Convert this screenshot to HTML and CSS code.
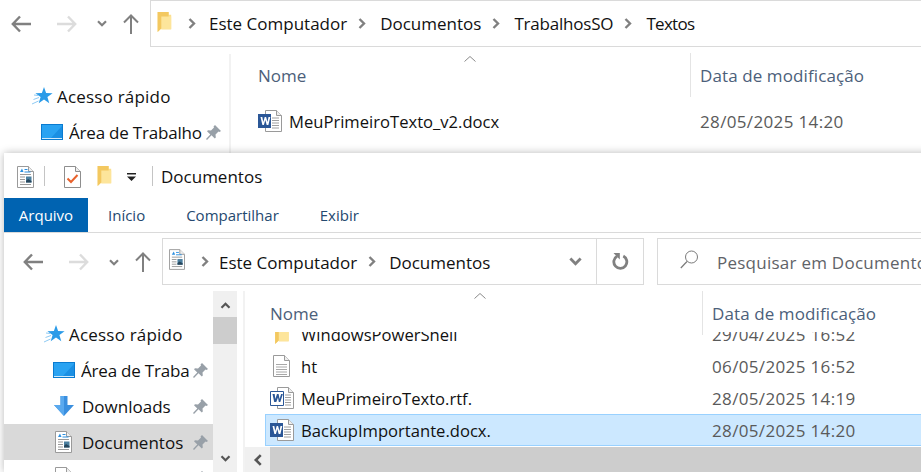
FILE: index.html
```html
<!DOCTYPE html>
<html lang="pt">
<head>
<meta charset="utf-8">
<title>Documentos</title>
<link rel="stylesheet" href="styles.css">
</head>
<body>
<svg class="defs" width="0" height="0" aria-hidden="true">
  <symbol id="i-back" viewBox="0 0 20 18"><path d="M9 1.500 1.800 9 9 16.500M2 9h18" fill="none" stroke="currentColor" stroke-width="2.400"/></symbol>
  <symbol id="i-fwd" viewBox="0 0 20 18"><path d="M11 1.500 18.200 9 11 16.500M18 9H0" fill="none" stroke="currentColor" stroke-width="2.400"/></symbol>
  <symbol id="i-up" viewBox="0 0 16 20"><path d="M1 8.500 8 1.500l7 7M8 2v18" fill="none" stroke="currentColor" stroke-width="2"/></symbol>
  <symbol id="i-chev" viewBox="0 0 10 7"><path d="M1 1.200 5 5.200 9 1.200" fill="none" stroke="currentColor" stroke-width="2.200"/></symbol>
  <symbol id="i-crumb" viewBox="0 0 8 11"><path d="M1.500 1 6 5.500 1.500 10" fill="none" stroke="currentColor" stroke-width="2.400"/></symbol>
  <symbol id="i-folder" viewBox="0 0 15 24"><path d="M0 1h12v3h2.800v16H4v-1L0 23Z" fill="#fbe08f"/><path d="M0 1h12v18H4l-4 4Z" fill="#f3c860"/><path d="M4 6h10.800v14H4Z" fill="#fde59b"/></symbol>
  <symbol id="i-star" viewBox="0 0 21 18"><path d="M12 0l2.100 6.100 6.500.1-5.200 3.900 1.900 6.200-5.300-3.700-5.300 3.700 1.900-6.200-5.200-3.900 6.500-.1Z" fill="#2b9be8"/><path d="M0 17l6.500-3M1.500 12.500l5.500-2M2 8l4.500.5" stroke="#8fcaf3" stroke-width="1"/></symbol>
  <symbol id="i-desk" viewBox="0 0 22 16"><path d="M0 0h22v16H0Z" fill="#0a7bd0"/><path d="M1 1h20v13H1Z" fill="#2aa3f2"/><path d="M10 14 21 2v12Z" fill="#1a8fe3"/><path d="M1 14.500h20" stroke="#cfeafc"/></symbol>
  <symbol id="i-pin" viewBox="0 0 15 15"><path d="M9 0l6 6-1.500 1-1-.5-3 3 .3 3-1 1-3.300-3.300L1 15l-1-1 4.300-4.500L1 6.200l1-1 3 .3 3-3-.5-1Z" fill="#98a0a8"/></symbol>
  <symbol id="i-down" viewBox="0 0 20 20"><path d="M6.500 0h7v9H20l-10 11L0 9h6.500Z" fill="#3a8fdf"/><path d="M6.500 0H10v20L0 9h6.500Z" fill="#5aa9ee"/></symbol>
  <symbol id="i-doc" viewBox="0 0 17 22"><path d="M.5.500h11l5 5v16H.5Z" fill="#fff" stroke="#9a9a9a"/><path d="M11.500.500v5h5" fill="#eee" stroke="#9a9a9a"/><path d="M3 9.500h11M3 12h11M3 14.500h11M3 17h11M3 19.500h11" stroke="#a8a8a8"/></symbol>
  <symbol id="i-docs" viewBox="0 0 17 22"><path d="M.5.500h11l5 5v16H.5Z" fill="#fff" stroke="#9a9a9a"/><path d="M11.500.500v5h5" fill="#eee" stroke="#9a9a9a"/><path d="M3 6 5 2.500 6.500 6Z" fill="#2b8fe0"/><path d="M7.500 3.500h3M7.500 6h6" stroke="#2b8fe0"/><path d="M3 8.500h11M3 11h5M3 13.500h5M3 16h5M3 18.500h11" stroke="#999"/><path d="M9 10.500h5.500v6H9Z" fill="#4b7f9f"/><path d="M9 15l2-2 3.500 2v1.500H9Z" fill="#26465c"/></symbol>
  <symbol id="i-check" viewBox="0 0 17 22"><path d="M.5.500h11l5 5v16H.5Z" fill="#fff" stroke="#8e8e8e"/><path d="M11.500.500v5h5" fill="#eee" stroke="#8e8e8e"/><path d="M3.500 12.500l3.500 3.500 6.500-7" fill="none" stroke="#e8622c" stroke-width="2"/></symbol>
  <symbol id="i-word" viewBox="0 0 24 22"><path d="M7.500.500h11l5 5v16h-16Z" fill="#fff" stroke="#9a9a9a"/><path d="M18.500.500v5h5" fill="#eee" stroke="#9a9a9a"/><path d="M14 8h7M14 10.500h7M14 13h7M14 15.500h7M14 18h7" stroke="#a0a0a0"/><path d="M0 4h13v14H0Z" fill="#2b5797"/><path d="M2.500 7h1.800l1 5 1.400-5h1.400l1.400 5 1-5h1.800l-1.900 8H8.700L7.300 10 5.900 15H4.400Z" fill="#fff"/></symbol>
  <symbol id="i-rtf" viewBox="0 0 24 22"><path d="M7.500.500h11l5 5v16h-16Z" fill="#fff" stroke="#9a9a9a"/><path d="M18.500.500v5h5" fill="#eee" stroke="#9a9a9a"/><path d="M15 8h6M15 10.500h6M15 13h6M15 15.500h6M15 18h6" stroke="#a0a0a0"/><path d="M.5 4.500h13v14H.5Z" fill="#fff" stroke="#2b5797"/><path d="M2.500 7h2.200l.6 5 1.700-5h1.600l1 5 1.500-5h1.800l-2.600 8H8.800L8 10.500 6.300 15H4.200Z" fill="#2b5797"/></symbol>
  <symbol id="i-search" viewBox="0 0 19 19"><circle cx="11.500" cy="7" r="6" fill="none" stroke="#7a7a7a"/><path d="M7 11.500.8 18" stroke="#7a7a7a" stroke-width="1.200" fill="none"/></symbol>
  <symbol id="i-refresh" viewBox="0 0 17 17"><path d="M5 3.200a6.500 6.500 0 1 0 6.300-.2" fill="none" stroke="#808080" stroke-width="2.800"/><path d="M1.500 0h6.300v6.500Z" fill="#808080"/></symbol>
  <symbol id="i-qat" viewBox="0 0 9 8"><path d="M0 0h9v1.500H0ZM0 3.500h9L4.500 8Z" fill="#222"/></symbol>
  <symbol id="i-sort" viewBox="0 0 12 6"><path d="M.5 5.500 6 .5l5.500 5" fill="none" stroke="#8a8a8a"/></symbol>
</svg>

<main class="desktop">
  <section class="window window-back">
    <nav class="navrow">
      <div class="navbtns">
        <svg class="ico-back"><use href="#i-back"/></svg>
        <svg class="ico-fwd"><use href="#i-fwd"/></svg>
        <svg class="ico-chev"><use href="#i-chev"/></svg>
        <svg class="ico-up"><use href="#i-up"/></svg>
      </div>
      <div class="address address-full">
        <svg class="ico-folder-addr"><use href="#i-folder"/></svg>
        <svg class="crumb first"><use href="#i-crumb"/></svg><span>Este Computador</span>
        <svg class="crumb"><use href="#i-crumb"/></svg><span>Documentos</span>
        <svg class="crumb"><use href="#i-crumb"/></svg><span class="tight">TrabalhosSO</span>
        <svg class="crumb"><use href="#i-crumb"/></svg><span class="tighter">Textos</span>
      </div>
    </nav>
    <div class="panes panes-back">
      <aside class="tree">
        <div class="tree-row tree-root"><svg class="ico-star"><use href="#i-star"/></svg><span>Acesso rápido</span></div>
        <div class="tree-row"><svg class="ico-desk"><use href="#i-desk"/></svg><span class="tree-label tight">Área de Trabalho</span><svg class="ico-pin"><use href="#i-pin"/></svg></div>
      </aside>
      <div class="files">
        <header class="cols">
          <span class="col-name">Nome<svg class="ico-sort"><use href="#i-sort"/></svg></span>
          <span class="col-date">Data de modificação</span>
        </header>
        <div class="file file-first">
          <span class="file-name"><svg class="ico-word"><use href="#i-word"/></svg>MeuPrimeiroTexto_v2.docx</span>
          <span class="file-date">28/05/2025 14:20</span>
        </div>
      </div>
    </div>
  </section>

  <section class="window window-front">
    <header class="titlebar">
      <svg class="ico-doc"><use href="#i-docs"/></svg>
      <i class="qat-sep"></i>
      <svg class="ico-doc qat-check"><use href="#i-check"/></svg>
      <svg class="ico-qfolder"><use href="#i-folder"/></svg>
      <svg class="ico-qat"><use href="#i-qat"/></svg>
      <i class="qat-sep second"></i>
      <span class="title">Documentos</span>
    </header>
    <div class="tabs">
      <span class="tab tab-file">Arquivo</span>
      <span class="tab">Início</span>
      <span class="tab">Compartilhar</span>
      <span class="tab">Exibir</span>
    </div>
    <nav class="navrow navrow-front">
      <div class="navbtns">
        <svg class="ico-back"><use href="#i-back"/></svg>
        <svg class="ico-fwd"><use href="#i-fwd"/></svg>
        <svg class="ico-chev"><use href="#i-chev"/></svg>
        <svg class="ico-up"><use href="#i-up"/></svg>
      </div>
      <div class="address address-front">
        <svg class="ico-doc-addr"><use href="#i-docs"/></svg>
        <svg class="crumb first"><use href="#i-crumb"/></svg><span>Este Computador</span>
        <svg class="crumb"><use href="#i-crumb"/></svg><span>Documentos</span>
        <svg class="addr-drop"><use href="#i-chev"/></svg>
        <div class="addr-refresh"><svg class="ico-refresh"><use href="#i-refresh"/></svg></div>
      </div>
      <div class="search">
        <svg class="ico-search"><use href="#i-search"/></svg>
        <span>Pesquisar em Documentos</span>
      </div>
    </nav>
    <div class="panes panes-front">
      <aside class="tree tree-front">
        <div class="tree-list">
          <div class="tree-row tree-root"><svg class="ico-star"><use href="#i-star"/></svg><span>Acesso rápido</span></div>
          <div class="tree-row"><svg class="ico-desk"><use href="#i-desk"/></svg><span class="tree-label tight">Área de Traba</span><svg class="ico-pin"><use href="#i-pin"/></svg></div>
          <div class="tree-row"><svg class="ico-dl"><use href="#i-down"/></svg><span class="tree-label">Downloads</span><svg class="ico-pin"><use href="#i-pin"/></svg></div>
          <div class="tree-row selected"><svg class="ico-doc tree-doc"><use href="#i-docs"/></svg><span class="tree-label">Documentos</span><svg class="ico-pin"><use href="#i-pin"/></svg></div>
          <div class="tree-row tree-cut"><svg class="ico-doc tree-doc"><use href="#i-doc"/></svg><svg class="ico-pin"><use href="#i-pin"/></svg></div>
        </div>
        <div class="vscroll">
          <svg class="sb-up"><use href="#i-chev"/></svg>
          <div class="sb-thumb"></div>
          <svg class="sb-down"><use href="#i-chev"/></svg>
        </div>
      </aside>
      <div class="files files-front">
        <header class="cols">
          <span class="col-name">Nome<svg class="ico-sort"><use href="#i-sort"/></svg></span>
          <span class="col-date">Data de modificação</span>
        </header>
        <div class="file-list">
          <div class="file file-clip">
            <span class="file-name"><svg class="ico-rowfolder"><use href="#i-folder"/></svg>WindowsPowerShell</span>
            <span class="file-date">29/04/2025 16:52</span>
          </div>
          <div class="file">
            <span class="file-name"><svg class="ico-rowdoc"><use href="#i-doc"/></svg>ht</span>
            <span class="file-date">06/05/2025 16:52</span>
          </div>
          <div class="file">
            <span class="file-name"><svg class="ico-word"><use href="#i-rtf"/></svg>MeuPrimeiroTexto.rtf.</span>
            <span class="file-date">28/05/2025 14:19</span>
          </div>
          <div class="file file-selected">
            <span class="file-name"><svg class="ico-word"><use href="#i-word"/></svg>BackupImportante.docx.</span>
            <span class="file-date">28/05/2025 14:20</span>
          </div>
        </div>
        <div class="hscroll">
          <div class="hs-btn"><svg class="hs-left"><use href="#i-crumb"/></svg></div>
          <div class="hs-thumb"></div>
        </div>
      </div>
    </div>
  </section>
</main>
</body>
</html>
```
FILE: styles.css
```css
* { box-sizing: border-box; }
html, body { margin: 0; padding: 0; height: 100%; overflow: hidden; background: #fff; }
body { font-family: "Open Sans", "Noto Sans", "Liberation Sans", sans-serif; font-size: 17px; color: #111; }
.defs { position: absolute; }
svg { display: block; flex: none; }
.tight { letter-spacing: -.2px; }
.tighter { letter-spacing: -.7px; }

.desktop { position: relative; width: 921px; height: 472px; overflow: hidden; }
.window { position: absolute; background: #fff; display: flex; flex-direction: column; }
.window-back { left: 0; top: 0; width: 921px; height: 472px; }
.window-front { left: 4px; top: 153px; width: 930px; height: 319px; box-shadow: 0 0 8px rgba(0,0,0,.28); }

/* navigation row */
.navrow { display: flex; align-items: center; height: 47px; flex: none; }
.navrow-front { height: 57px; padding: 5px 0 5px; border-top: 1px solid #dadada; }
.navbtns { display: flex; align-items: center; width: 150px; flex: none; color: #808080; padding-left: 11px; }
.navrow-front .navbtns { width: 158px; padding-left: 19px; padding-top: 2px; }
.ico-back { width: 20px; height: 18px; }
.ico-fwd { width: 20px; height: 18px; margin-left: 26px; color: #dcdcdc; }
.ico-chev { width: 10px; height: 7px; margin-left: 20px; }
.ico-up { width: 16px; height: 20px; margin-left: 16px; }

.address { display: flex; align-items: center; height: 47px; border: 1px solid #dadada; flex: none; }
.address-full { flex: 1; margin-right: -4px; margin-top: -1px; padding-left: 6px; }
.address-front { width: 482px; height: 47px; padding-left: 6px; }
.address-front span { padding-top: 2px; }
.ico-folder-addr { width: 15px; height: 22px; margin-top: -2px; }
.ico-doc-addr { width: 16px; height: 21px; margin-top: -4px; }
.crumb { width: 8px; height: 11px; color: #808080; margin: 0 14px 0 11px; }
.crumb.first { margin-left: 16px; margin-right: 13px; }
.address-front .crumb.first { margin-right: 10px; }
.address-front .crumb { margin-right: 13px; }
.addr-drop { width: 15px; height: 9px; margin-left: auto; margin-right: 13px; color: #808080; }
.addr-refresh { width: 47px; height: 45px; border-left: 1px solid #dadada; display: flex; align-items: center; justify-content: center; }
.ico-refresh { width: 17px; height: 17px; }
.search { display: flex; align-items: center; margin-left: 13px; width: 300px; height: 47px; border: 1px solid #dadada; color: #5f6368; white-space: nowrap; padding-left: 22px; flex: none; letter-spacing: .25px; }
.search span { padding-top: 2px; }
.ico-search { width: 19px; height: 19px; margin-right: 18px; margin-top: -3px; }

/* panes */
.panes { display: flex; flex: 1; min-height: 0; }
.tree { display: flex; flex-direction: column; flex: none; }
.panes-back .tree { width: 229px; padding-top: 31px; }
.tree-row { display: flex; align-items: center; height: 36px; padding-left: 41px; white-space: nowrap; }
.tree-root { padding-left: 32px; letter-spacing: .2px; }
.ico-star { width: 21px; height: 18px; margin-right: 4px; }
.ico-desk { width: 22px; height: 16px; margin-right: 6px; }
.ico-dl { width: 20px; height: 20px; margin-right: 8px; margin-left: 1px; }
.ico-doc { width: 17px; height: 22px; }
.tree-doc { margin-left: 2px; margin-right: 10px; }
.tree-label { overflow: hidden; flex: 0 1 auto; }
.ico-pin { width: 15px; height: 15px; margin-left: auto; }
.panes-back .tree-row .ico-pin { margin-right: 8px; }

.tree-front { width: 236px; flex-direction: row; }
.tree-list { width: 209px; padding-top: 27px; flex: none; }
.tree-list .tree-root { padding-left: 40px; }
.tree-list .tree-row:not(.tree-root) { padding-left: 49px; }
.tree-list .ico-pin { margin-right: 5px; }
.tree-list .tree-label { max-width: 108px; }
.tree-row.selected { background: #d9d9d9; }

.vscroll { width: 24px; margin-top: 2px; background: #f0f0f0; display: flex; flex-direction: column; align-items: center; }
.sb-up { width: 11px; height: 7px; margin-top: 11px; transform: rotate(180deg); color: #555; }
.sb-thumb { width: 24px; height: 27px; margin-top: 8px; background: #cdcdcd; }
.sb-down { width: 11px; height: 7px; margin-top: auto; margin-bottom: 10px; color: #555; }

.files { flex: 1; display: flex; flex-direction: column; min-width: 0; border-left: 2px solid #f2f2f2; margin-top: 7px; position: relative; }
.files-front { margin-top: 2px; margin-left: 3px; }
.cols { display: flex; height: 44px; flex: none; align-items: center; color: #4c607a; position: relative; }
.panes-back .cols { padding-bottom: 2px; }
.col-name { width: 459px; padding-left: 27px; flex: none; }
.files-front .col-name { width: 457px; padding-left: 25px; }
.col-date { border-left: 1px solid #e4e4e4; height: 44px; display: flex; align-items: center; padding-left: 9px; white-space: nowrap; letter-spacing: .1px; }
.ico-sort { position: absolute; left: 233px; top: 2px; width: 12px; height: 6px; }
.files-front .ico-sort { left: 229px; top: 2px; }

.file { display: flex; align-items: center; height: 32px; white-space: nowrap; flex: none; font-size: 16.6px; }
.file-first { margin-top: 7px; }
.file-name { display: flex; align-items: center; width: 469px; padding-left: 27px; flex: none; }
.file-date { color: #5a5a5a; letter-spacing: .35px; font-size: 17px; }
.ico-word { width: 24px; height: 22px; margin-right: 7px; }
.ico-rowdoc { width: 17px; height: 22px; margin: 0 11px 0 3px; }
.ico-rowfolder { width: 18px; height: 22px; margin: 0 10px 0 3px; }
.file-list { height: 115px; margin-top: -3px; overflow: hidden; display: flex; flex-direction: column; justify-content: flex-end; padding-bottom: 1px; flex: none; }
.files-front .file-name { padding-left: 25px; width: 467px; }
.file-selected { background: #cce8ff; box-shadow: inset 0 0 0 1px #99d1ff; margin-left: 20px; }
.files-front .file-selected .file-name { padding-left: 5px; width: 447px; }

.hscroll { display: flex; height: 25px; flex: none; margin-top: auto; }
.hs-btn { width: 25px; background: #f0f0f0; display: flex; align-items: center; justify-content: center; }
.hs-left { width: 10px; height: 12px; transform: rotate(180deg); color: #555; }
.hs-thumb { flex: 1; background: #cdcdcd; }

/* title bar + tabs */
.titlebar { display: flex; align-items: center; height: 45px; flex: none; padding-left: 13px; }
.titlebar .ico-doc { margin-top: 2px; }
.qat-sep { width: 1px; height: 20px; background: #c4c4c4; margin-left: 10px; }
.qat-check { margin-left: 19px; }
.ico-qfolder { width: 15px; height: 22px; margin-left: 16px; }
.ico-qat { width: 9px; height: 8px; margin-left: 15px; margin-top: 3px; }
.qat-sep.second { margin-left: 16px; }
.title { margin-left: 8px; padding-top: 2px; }
.tabs { display: flex; height: 34px; flex: none; font-size: 15px; color: #25496f; align-items: center; }
.tab { padding: 0 41px 0 0; }
.tab-file { background: #0063b1; color: #fff; width: 84px; height: 34px; display: flex; align-items: center; justify-content: center; padding: 0; margin-right: 20px; }
```
